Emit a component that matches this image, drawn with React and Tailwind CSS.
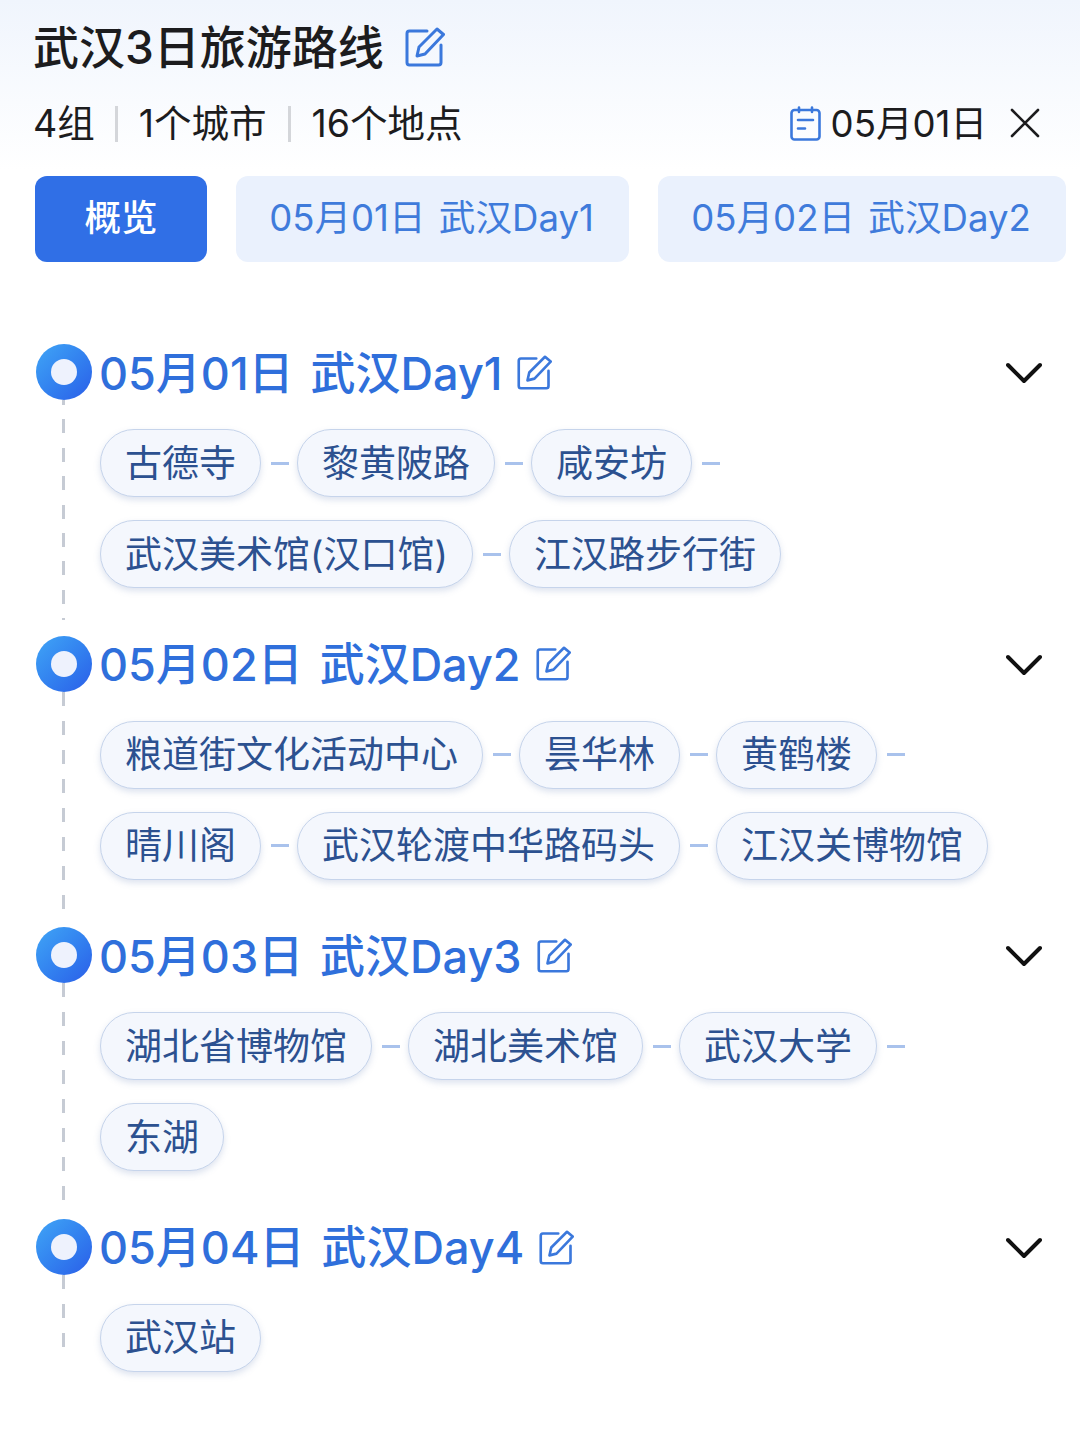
import React from "react";

const FONT = "font-['Inter','Noto_Sans_CJK_SC',sans-serif]";

const DASH_FIRST = "bg-[repeating-linear-gradient(to_bottom,#c6cbd4_0,#c6cbd4_5px,transparent_5px,transparent_19.400px,#c6cbd4_19.400px,#c6cbd4_28.400px)]";
const DASH = "bg-[repeating-linear-gradient(to_bottom,#c6cbd4_0,#c6cbd4_14px,transparent_14px,transparent_29px)]";

const days = [
  { title: "05月01日 武汉Day1", dash: DASH_FIRST, stops: ["古德寺", "黎黄陂路", "咸安坊", "武汉美术馆(汉口馆)", "江汉路步行街"] },
  { title: "05月02日 武汉Day2", dash: DASH, stops: ["粮道街文化活动中心", "昙华林", "黄鹤楼", "晴川阁", "武汉轮渡中华路码头", "江汉关博物馆"] },
  { title: "05月03日 武汉Day3", dash: DASH, stops: ["湖北省博物馆", "湖北美术馆", "武汉大学", "东湖"] },
  { title: "05月04日 武汉Day4", dash: DASH, stops: ["武汉站"] },
];

function EditIcon({ className }) {
  return (
    <svg viewBox="0 0 40 40" fill="none" stroke="#3b78dc" strokeWidth="3" strokeLinecap="round" strokeLinejoin="round" className={className}>
      <path d="M22 4H4.500A2.500 2.500 0 0 0 2 6.500V35.500A2.500 2.500 0 0 0 4.500 38h29a2.500 2.500 0 0 0 2.500-2.500V18" />
      <path d="M32 2l6.500 5.500L20 27l-8 2 2-9z" />
    </svg>
  );
}

function CalendarIcon() {
  return (
    <svg viewBox="0 0 31 35" fill="none" stroke="#3b78dc" strokeWidth="2.600" strokeLinecap="round" strokeLinejoin="round" className="w-[31px] h-[35px]">
      <rect x="1.500" y="4" width="28" height="29.500" rx="3" />
      <path d="M9 1.500V6M22 1.500V6M8 14H23M8 22.500H15" />
    </svg>
  );
}

function Chevron() {
  return (
    <svg viewBox="0 0 36 22" fill="none" stroke="#111" strokeWidth="4" strokeLinecap="round" strokeLinejoin="round" className="mt-[2px] w-[36px] h-[22px]">
      <path d="M2 3L18 19L34 3" />
    </svg>
  );
}

function Chip({ name, last }) {
  return (
    <div className="flex items-center">
      <div className="h-[68px] px-[24px] flex items-center rounded-full bg-[#f4f7fd] border border-[#c6d4eb] shadow-[0_3px_6px_rgba(120,145,190,0.25)] text-[37px] text-[#2c5190]">
        {name}
      </div>
      {!last && <div className="ml-[10px] mr-[8px] w-[18px] h-[3px] bg-[#a9c2ec]" />}
    </div>
  );
}

function DaySection({ day, isLast }) {
  return (
    <section className={`flex ${isLast ? "" : "pb-[47.600px]"}`}>
      <div className="w-[65px] shrink-0 flex flex-col">
        <div className="ml-px w-[56px] h-[56px] rounded-full bg-gradient-to-br from-[#41a5f6] to-[#2c5de8] flex items-center justify-center">
          <div className="w-[26px] h-[26px] rounded-full bg-[#eef2fd]" />
        </div>
        <div className={`ml-[27px] w-[3px] flex-1 ${isLast ? "mb-[25px]" : "mb-[-32px]"} ${day.dash}`} />
      </div>
      <div className="flex-1 min-w-0">
        <div className="h-[56px] flex items-center justify-between pr-[24px]">
          <div className="flex items-center -ml-px">
            <span className="text-[45px] font-medium text-[#2f6fdb] whitespace-pre [word-spacing:5px] pt-[2px]">{day.title}</span>
            <EditIcon className="ml-[15px] w-[35px] h-[35px]" />
          </div>
          <Chevron />
        </div>
        <div className="mt-[29px] flex flex-wrap gap-y-[23px] pr-[50px]">
          {day.stops.map((s, i) => (
            <Chip key={s} name={s} last={i === day.stops.length - 1} />
          ))}
        </div>
      </div>
    </section>
  );
}

export default function App() {
  return (
    <div className={`${FONT} w-[1080px] h-[1440px] overflow-hidden pl-[35px] pr-[14px] bg-gradient-to-b from-[#f0f5fd] to-white to-[170px]`}>
      <div className="pt-[20px] h-[74px] flex items-center text-[46px] font-medium text-[#1c1c1e]">
        <span className="-ml-[2px]">武汉3日旅游路线</span>
        <EditIcon className="ml-[21px] w-[40px] h-[40px]" />
      </div>

      <div className="mt-[26px] h-[46px] flex items-center justify-between pr-[26px] text-[37.500px] text-[#1c1c1e]">
        <div className="flex items-center -ml-[2px] pt-[2px]">
          <span>4组</span>
          <div className="ml-[20px] mr-[21px] w-[3px] h-[36px] bg-[#d4d6da]" />
          <span>1个城市</span>
          <div className="mx-[21px] w-[3px] h-[36px] bg-[#d4d6da]" />
          <span>16个地点</span>
        </div>
        <div className="flex items-center">
          <CalendarIcon />
          <span className="ml-[10px] pt-[2px] text-[36.600px]">05月01日</span>
          <svg viewBox="0 0 30 30" fill="none" stroke="#1c1c1e" strokeWidth="2.600" strokeLinecap="round" className="ml-[23px] w-[30px] h-[30px]">
            <path d="M2 2L28 28M28 2L2 28" />
          </svg>
        </div>
      </div>

      <div className="mt-[30px] flex gap-[29px] text-[36.600px] whitespace-pre [word-spacing:3px]">
        <div className="w-[172px] h-[86px] pb-[2px] rounded-[12px] bg-[#306fe6] text-white font-medium flex items-center justify-center">概览</div>
        <div className="w-[393px] h-[86px] pb-[2px] pr-[2px] rounded-[12px] bg-[#eaf1fd] text-[#3f7bdb] flex items-center justify-center">05月01日 武汉Day1</div>
        <div className="w-[408px] h-[86px] pb-[2px] pr-[2px] rounded-[12px] bg-[#eaf1fd] text-[#3f7bdb] flex items-center justify-center">05月02日 武汉Day2</div>
      </div>

      <div className="mt-[82.300px]">
        {days.map((d, i) => (
          <DaySection key={d.title} day={d} isLast={i === days.length - 1} />
        ))}
      </div>
    </div>
  );
}
